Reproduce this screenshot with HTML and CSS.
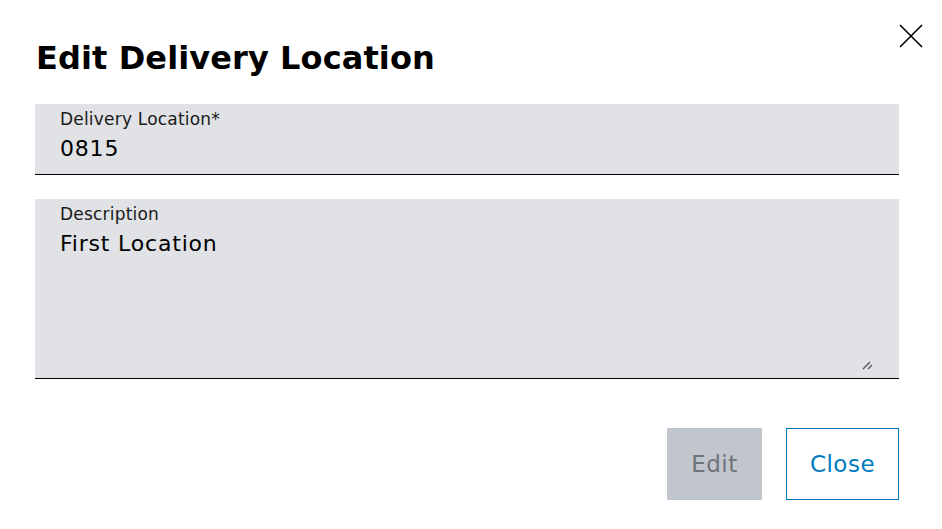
FILE: index.html
```html
<!DOCTYPE html>
<html lang="en">
<head>
<meta charset="utf-8">
<title>Edit Delivery Location</title>
<link rel="stylesheet" href="styles.css">
</head>
<body>
<div class="dialog">
  <header class="dialog-header">
    <h1 class="dialog-title">Edit Delivery Location</h1>
    <button class="close-btn" aria-label="Close">
      <svg width="24" height="24" viewBox="0 0 24 24"><path d="M1 1 L23 23 M23 1 L1 23" stroke="#000" stroke-width="1.6" fill="none"/></svg>
    </button>
  </header>
  <div class="field field-input">
    <label class="field-label">Delivery Location*</label>
    <div class="field-value">0815</div>
  </div>
  <div class="field field-textarea">
    <label class="field-label">Description</label>
    <div class="field-value">First Location</div>
    <svg class="grip" width="12" height="10" viewBox="0 0 12 10"><path d="M1 9 L8 2 M6 9 L10 5" stroke="#555" stroke-width="1.3" fill="none"/></svg>
  </div>
  <div class="actions">
    <button class="btn btn-disabled">Edit</button>
    <button class="btn btn-secondary">Close</button>
  </div>
</div>
</body>
</html>
```
FILE: styles.css
```css
html, body {
  margin: 0;
  padding: 0;
  background: #fff;
  font-family: "DejaVu Sans", "Noto Sans", sans-serif;
  color: #000;
}
.dialog {
  width: 942px;
  height: 529px;
  box-sizing: border-box;
  padding: 0 43px 0 35px;
}
.dialog-header {
  display: flex;
  justify-content: space-between;
  align-items: flex-start;
  margin-right: -24px;
  padding-top: 24px;
  height: 80px;
}
.dialog-title {
  margin: 14px 0 0 1px;
  font-size: 32px;
  font-weight: 700;
  line-height: 40px;
  letter-spacing: 0.1px;
}
.close-btn {
  border: 0;
  background: none;
  padding: 0;
  width: 24px;
  height: 24px;
  cursor: pointer;
}
.field {
  position: relative;
  background: #e0e2e5;
  border-bottom: 1px solid #000;
  box-sizing: border-box;
  padding: 5px 25px 0;
}
.field-input {
  height: 71px;
}
.field-textarea {
  height: 180px;
  margin-top: 24px;
}
.field-label {
  display: block;
  font-size: 17px;
  line-height: 20px;
  letter-spacing: 0.2px;
  color: #1a1a1a;
}
.field-value {
  font-size: 22px;
  line-height: 30px;
  letter-spacing: 0.8px;
  margin-top: 5px;
}
.grip {
  position: absolute;
  right: 25px;
  bottom: 8px;
}
.actions {
  display: flex;
  justify-content: flex-end;
  gap: 24px;
  margin-top: 49px;
}
.btn {
  font-family: inherit;
  font-size: 23px;
  letter-spacing: 0.5px;
  height: 72px;
  box-sizing: border-box;
  padding: 0;
}
.btn-disabled {
  width: 95px;
  background: #c1c5cc;
  border: 0;
  color: #6f747a;
}
.btn-secondary {
  width: 113px;
  background: #fff;
  border: 1px solid #007bc0;
  color: #007bc0;
}
```
